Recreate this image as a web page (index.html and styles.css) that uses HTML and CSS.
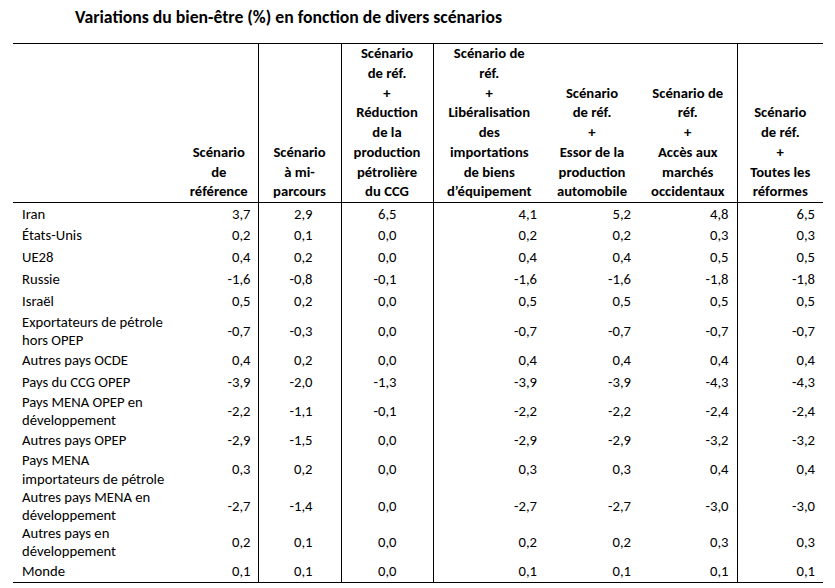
FILE: index.html
```html
<!DOCTYPE html>
<html lang="fr">
<head>
<meta charset="utf-8">
<title>Variations du bien-être</title>
<link rel="stylesheet" href="styles.css">
</head>
<body>
<div class="page">
  <h1 class="title">Variations du bien-être (%) en fonction de divers scénarios</h1>
  <table class="tbl">
    <colgroup>
      <col class="c0"><col class="c1"><col class="c2"><col class="c3">
      <col class="c4"><col class="c5"><col class="c6"><col class="c7">
    </colgroup>
    <thead>
      <tr>
        <th></th>
        <th class="vr">Scénario<br>de<br>référence</th>
        <th class="vr">Scénario<br>à mi-<br>parcours</th>
        <th class="vr">Scénario<br>de réf.<br>+<br>Réduction<br>de la<br>production<br>pétrolière<br>du CCG</th>
        <th>Scénario de<br>réf.<br>+<br>Libéralisation<br>des<br>importations<br>de biens<br>d’équipement</th>
        <th>Scénario<br>de réf.<br>+<br>Essor de la<br>production<br>automobile</th>
        <th class="vr">Scénario de<br>réf.<br>+<br>Accès aux<br>marchés<br>occidentaux</th>
        <th>Scénario<br>de réf.<br>+<br>Toutes les<br>réformes</th>
      </tr>
    </thead>
    <tbody>
      <tr><td class="lbl">Iran</td><td class="v1 vr">3,7</td><td class="v2 vr">2,9</td><td class="v3 vr">6,5</td><td class="v">4,1</td><td class="v">5,2</td><td class="v vr">4,8</td><td class="v">6,5</td></tr>
      <tr><td class="lbl">États-Unis</td><td class="v1 vr">0,2</td><td class="v2 vr">0,1</td><td class="v3 vr">0,0</td><td class="v">0,2</td><td class="v">0,2</td><td class="v vr">0,3</td><td class="v">0,3</td></tr>
      <tr><td class="lbl">UE28</td><td class="v1 vr">0,4</td><td class="v2 vr">0,2</td><td class="v3 vr">0,0</td><td class="v">0,4</td><td class="v">0,4</td><td class="v vr">0,5</td><td class="v">0,5</td></tr>
      <tr><td class="lbl">Russie</td><td class="v1 vr">-1,6</td><td class="v2 vr">-0,8</td><td class="v3 vr">-0,1</td><td class="v">-1,6</td><td class="v">-1,6</td><td class="v vr">-1,8</td><td class="v">-1,8</td></tr>
      <tr><td class="lbl">Israël</td><td class="v1 vr">0,5</td><td class="v2 vr">0,2</td><td class="v3 vr">0,0</td><td class="v">0,5</td><td class="v">0,5</td><td class="v vr">0,5</td><td class="v">0,5</td></tr>
      <tr><td class="lbl">Exportateurs de pétrole<br>hors OPEP</td><td class="v1 vr">-0,7</td><td class="v2 vr">-0,3</td><td class="v3 vr">0,0</td><td class="v">-0,7</td><td class="v">-0,7</td><td class="v vr">-0,7</td><td class="v">-0,7</td></tr>
      <tr><td class="lbl">Autres pays OCDE</td><td class="v1 vr">0,4</td><td class="v2 vr">0,2</td><td class="v3 vr">0,0</td><td class="v">0,4</td><td class="v">0,4</td><td class="v vr">0,4</td><td class="v">0,4</td></tr>
      <tr><td class="lbl">Pays du CCG OPEP</td><td class="v1 vr">-3,9</td><td class="v2 vr">-2,0</td><td class="v3 vr">-1,3</td><td class="v">-3,9</td><td class="v">-3,9</td><td class="v vr">-4,3</td><td class="v">-4,3</td></tr>
      <tr><td class="lbl">Pays MENA OPEP en<br>développement</td><td class="v1 vr">-2,2</td><td class="v2 vr">-1,1</td><td class="v3 vr">-0,1</td><td class="v">-2,2</td><td class="v">-2,2</td><td class="v vr">-2,4</td><td class="v">-2,4</td></tr>
      <tr><td class="lbl">Autres pays OPEP</td><td class="v1 vr">-2,9</td><td class="v2 vr">-1,5</td><td class="v3 vr">0,0</td><td class="v">-2,9</td><td class="v">-2,9</td><td class="v vr">-3,2</td><td class="v">-3,2</td></tr>
      <tr><td class="lbl">Pays MENA<br>importateurs de pétrole</td><td class="v1 vr">0,3</td><td class="v2 vr">0,2</td><td class="v3 vr">0,0</td><td class="v">0,3</td><td class="v">0,3</td><td class="v vr">0,4</td><td class="v">0,4</td></tr>
      <tr><td class="lbl">Autres pays MENA en<br>développement</td><td class="v1 vr">-2,7</td><td class="v2 vr">-1,4</td><td class="v3 vr">0,0</td><td class="v">-2,7</td><td class="v">-2,7</td><td class="v vr">-3,0</td><td class="v">-3,0</td></tr>
      <tr><td class="lbl">Autres pays en<br>développement</td><td class="v1 vr">0,2</td><td class="v2 vr">0,1</td><td class="v3 vr">0,0</td><td class="v">0,2</td><td class="v">0,2</td><td class="v vr">0,3</td><td class="v">0,3</td></tr>
      <tr><td class="lbl">Monde</td><td class="v1 vr">0,1</td><td class="v2 vr">0,1</td><td class="v3 vr">0,0</td><td class="v">0,1</td><td class="v">0,1</td><td class="v vr">0,1</td><td class="v">0,1</td></tr>
    </tbody>
  </table>
</div>
</body>
</html>
```

FILE: styles.css
```css
html, body {
  margin: 0;
  padding: 0;
  background: #ffffff;
}

body {
  font-family: "Carlito", "Calibri", "Lato", "Liberation Sans", sans-serif;
  color: #000;
}

.page {
  padding: 0 12px 0 13px;
}

.title {
  margin: 0 0 15px 62px;
  padding-top: 6px;
  font-size: 17.7px;
  line-height: 22px;
  font-weight: bold;
  color: #000;
}

.tbl {
  width: 810px;
  table-layout: fixed;
  border-collapse: collapse;
  border-spacing: 0;
  border-top: 1px solid #000;
  border-bottom: 1px solid #000;
  font-size: 14.67px;
}

.c0 { width: 167px; }
.c1 { width: 78px; }
.c2 { width: 83px; }
.c3 { width: 92px; }
.c4 { width: 112px; }
.c5 { width: 94px; }
.c6 { width: 98px; }
.c7 { width: 86px; }

.tbl th {
  padding: 0;
  font-weight: bold;
  text-align: center;
  vertical-align: bottom;
  line-height: 19.75px;
  color: #000;
  border-bottom: 1px solid #000;
}

.tbl td {
  padding: 0;
  line-height: 18.2px;
  vertical-align: middle;
  white-space: nowrap;
}

.tbl tbody tr {
  height: 22px;
}

.vr {
  border-right: 1px solid #000;
}

.lbl {
  padding-left: 9px !important;
  text-align: left;
}

.v1, .v2, .v3, .v {
  text-align: right;
}

.v1 { padding-right: 7px !important; }
.v2 { padding-right: 28px !important; }
.v3 { padding-right: 36px !important; }
.v  { padding-right: 8px !important; }
```
